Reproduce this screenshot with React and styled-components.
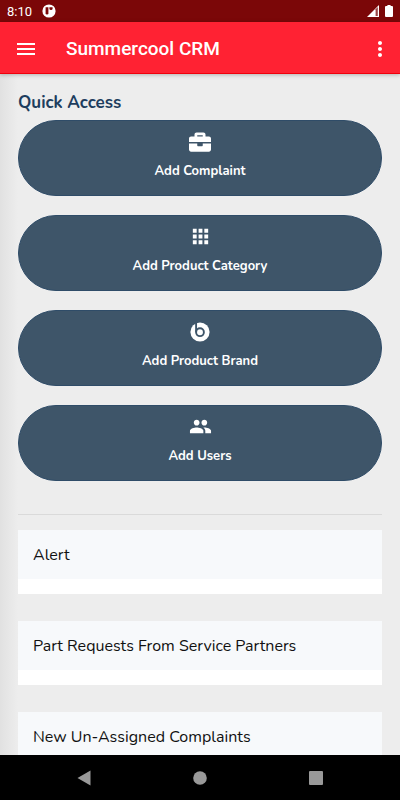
// App.jsx

import React from 'react';
import styled, { createGlobalStyle } from 'styled-components';
import { FaBriefcase } from 'react-icons/fa';
import { MdApps, MdGroup, MdMenu, MdMoreVert } from 'react-icons/md';

const GlobalStyle = createGlobalStyle`
  * {
    box-sizing: border-box;
  }

  body {
    margin: 0;
    font-family: Nunito, Lato, sans-serif;
    background-color: #ededed;
  }
`;

// Styled components
const Screen = styled.div`
  display: flex;
  flex-direction: column;
  height: 100vh;
`;

const StatusBar = styled.div`
  display: flex;
  flex-shrink: 0;
  align-items: center;
  justify-content: space-between;
  height: 22px;
  padding: 0 7px;
  color: #fff;
  background-color: #7b0708;
`;

const StatusGroup = styled.div`
  display: flex;
  align-items: center;
  gap: ${props => props.$gap};
`;

const Clock = styled.span`
  font-family: Roboto, sans-serif;
  font-size: 13px;
`;

const AppBar = styled.header`
  display: flex;
  flex-shrink: 0;
  align-items: center;
  height: 52px;
  padding: 2px 8px 0 14px;
  color: #fff;
  background-color: #ff2233;
  border-bottom: 1px solid #f0000c;
  box-shadow: 0 1px 4px rgba(0, 0, 0, 0.25);
  z-index: 1;
`;

const IconButton = styled.button`
  display: flex;
  padding: 0;
  border: 0;
  color: inherit;
  background: none;
  cursor: pointer;
`;

const Title = styled.h1`
  flex: 1;
  margin: 0 0 0 28px;
  font-family: Roboto, sans-serif;
  font-size: 19px;
  line-height: 24px;
  font-weight: 500;
`;

const Content = styled.main`
  flex: 1;
  min-height: 0;
  overflow-y: auto;
  scrollbar-width: none;
  padding: 16px 18px 0;
  color: #111;
  background: linear-gradient(to right, #e1e1e1, #ededed 18px);
`;

const Heading = styled.h2`
  margin: 0 0 4px;
  font-size: 17px;
  line-height: 26px;
  font-weight: 700;
  color: #1d3d5e;
`;

const QuickList = styled.div`
  display: flex;
  flex-direction: column;
  gap: 19px;
`;

const QuickButton = styled.button`
  display: flex;
  flex-direction: column;
  align-items: center;
  gap: 9px;
  height: 76px;
  padding: 9px 16px 0;
  border: 1px solid #2f4c68;
  border-radius: 38px;
  font-family: inherit;
  font-size: 13px;
  line-height: 18px;
  font-weight: 700;
  color: #fff;
  background-color: #3e5569;
  cursor: pointer;
`;

const IconSlot = styled.span`
  display: flex;
  align-items: center;
  justify-content: center;
  height: 23px;
`;

const Divider = styled.hr`
  margin: 33px 0 15px;
  border: 0;
  border-top: 1px solid #dadada;
`;

const Card = styled.section`
  margin-bottom: 27px;
  padding-bottom: 15px;
  background-color: #fff;
`;

const CardHeader = styled.h3`
  margin: 0;
  padding: 13px 15px 12px;
  font-size: 16px;
  line-height: 24px;
  font-weight: 400;
  background-color: #f7f9fb;
`;

const NavBar = styled.nav`
  display: flex;
  flex-shrink: 0;
  align-items: center;
  justify-content: space-around;
  height: 45px;
  padding: 0 26px;
  color: #999;
  background-color: #000;
`;

function NotificationIcon() {
    return (
        <svg width="14" height="14" viewBox="0 0 14 14" aria-hidden="true">
            <circle cx="7" cy="7" r="6.6" fill="#fff" />
            <path d="M3.6 3.2h2.8v6a1.4 1.4 0 0 1-2.8 0z" fill="#7b0708" />
            <path d="M7.4 3.2h3.2v1.2a1.6 1.6 0 0 1-3.2 0z" fill="#7b0708" />
        </svg>
    );
}

function SignalIcon() {
    return (
        <svg width="12" height="12" viewBox="0 0 12 12" aria-hidden="true">
            <path d="M12 0v12H0z" fill="#fff" />
            <path d="M8.6 4.2 10.8 2v9H8.6z" fill="#7b0708" opacity="0.75" />
        </svg>
    );
}

function BatteryIcon() {
    return (
        <svg width="8" height="12" viewBox="0 0 8 12" aria-hidden="true">
            <path d="M2.4 0h3.2v1H7a1 1 0 0 1 1 1v9a1 1 0 0 1-1 1H1a1 1 0 0 1-1-1V2a1 1 0 0 1 1-1h1.4z" fill="#fff" />
        </svg>
    );
}

function BrandIcon() {
    return (
        <svg width="22" height="22" viewBox="0 0 22 22" aria-hidden="true">
            <circle cx="11" cy="11" r="9.6" fill="#fff" />
            <circle cx="11" cy="11.2" r="3.9" fill="none" stroke="#3e5569" strokeWidth="1.9" />
            <path d="M7.1 1.6v9.6" fill="none" stroke="#3e5569" strokeWidth="1.9" />
            <path d="M9.8 8.8 13.2 11.2 9.8 13.6z" fill="#fff" />
        </svg>
    );
}

const quickLinks = [
    { label: 'Add Complaint', icon: <FaBriefcase size={22} /> },
    { label: 'Add Product Category', icon: <MdApps size={23} /> },
    { label: 'Add Product Brand', icon: <BrandIcon /> },
    { label: 'Add Users', icon: <MdGroup size={23} /> },
];

const cards = ['Alert', 'Part Requests From Service Partners', 'New Un-Assigned Complaints'];

function App() {
    return (
        <Screen>
            <GlobalStyle />
            <StatusBar>
                <StatusGroup $gap="10px">
                    <Clock>8:10</Clock>
                    <NotificationIcon />
                </StatusGroup>
                <StatusGroup $gap="6px">
                    <SignalIcon />
                    <BatteryIcon />
                </StatusGroup>
            </StatusBar>
            <AppBar>
                <IconButton aria-label="Menu"><MdMenu size={24} /></IconButton>
                <Title>Summercool CRM</Title>
                <IconButton aria-label="More options"><MdMoreVert size={24} /></IconButton>
            </AppBar>
            <Content>
                <Heading>Quick Access</Heading>
                <QuickList>
                    {quickLinks.map(link => (
                        <QuickButton key={link.label}>
                            <IconSlot>{link.icon}</IconSlot>
                            {link.label}
                        </QuickButton>
                    ))}
                </QuickList>
                <Divider />
                {cards.map(title => (
                    <Card key={title}>
                        <CardHeader>{title}</CardHeader>
                    </Card>
                ))}
            </Content>
            <NavBar>
                <IconButton aria-label="Back">
                    <svg width="14" height="16" viewBox="0 0 14 16"><path d="M13.5.5v15L.5 8z" fill="currentColor" /></svg>
                </IconButton>
                <IconButton aria-label="Home">
                    <svg width="14" height="14" viewBox="0 0 14 14"><circle cx="7" cy="7" r="6.8" fill="currentColor" /></svg>
                </IconButton>
                <IconButton aria-label="Recent apps">
                    <svg width="14" height="14" viewBox="0 0 14 14"><rect width="14" height="14" rx="1" fill="currentColor" /></svg>
                </IconButton>
            </NavBar>
        </Screen>
    );
}

export default App;
